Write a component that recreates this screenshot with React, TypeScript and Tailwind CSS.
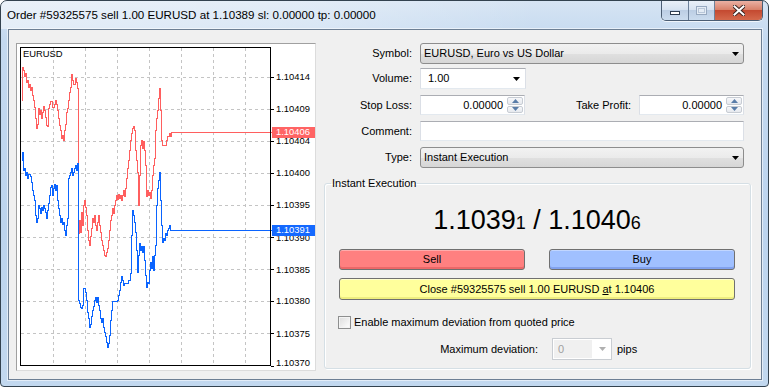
import React from "react";

type Pt = [number, number];

// traced tick path of the ask (red) and bid (blue) lines, in page pixels
const ASK: Pt[] = [
  [21, 100], [22, 67], [23, 70], [24, 76], [25, 73], [26, 82], [27, 80], [28, 87], [29, 84], [30, 90],
  [31, 87], [32, 95], [33, 100], [34, 107], [35, 118], [36, 128], [37, 124], [38, 108], [39, 114], [40, 110],
  [41, 118], [42, 112], [43, 106], [44, 110], [45, 117], [46, 125], [47, 126], [48, 108], [49, 104], [50, 101],
  [52, 107], [54, 104], [55, 100], [56, 104], [57, 110], [58, 118], [59, 125], [60, 130], [61, 138], [62, 135],
  [63, 140], [64, 130], [65, 124], [66, 112], [67, 108], [68, 100], [69, 92], [70, 87], [71, 74], [72, 80],
  [73, 84], [75, 78], [76, 82], [77, 88], [78, 233], [79, 220], [80, 232], [81, 212], [82, 225], [83, 205],
  [84, 200], [85, 207], [86, 215], [87, 230], [88, 240], [89, 245], [90, 236], [91, 228], [92, 218], [93, 222],
  [94, 215], [95, 225], [96, 230], [97, 222], [98, 215], [99, 225], [100, 232], [101, 240], [102, 245], [103, 250],
  [104, 255], [105, 256], [106, 252], [107, 248], [108, 240], [109, 230], [110, 220], [111, 215], [112, 208], [113, 213],
  [114, 205], [115, 200], [116, 195], [117, 199], [118, 194], [119, 198], [120, 195], [121, 200], [122, 195], [123, 190],
  [124, 196], [125, 188], [126, 178], [127, 168], [128, 160], [129, 150], [130, 140], [131, 133], [132, 128], [133, 126],
  [134, 130], [135, 150], [136, 160], [137, 172], [138, 205], [139, 175], [140, 145], [141, 140], [142, 148], [143, 141],
  [144, 150], [145, 165], [146, 196], [147, 190], [148, 195], [149, 192], [150, 198], [151, 190], [152, 175], [153, 165],
  [154, 158], [155, 130], [156, 118], [157, 110], [158, 98], [159, 88], [160, 110], [161, 140], [162, 145], [165, 145],
  [166, 140], [167, 136], [169, 133], [170, 136], [171, 132], [272, 132],
];

const BID: Pt[] = [
  [21, 160], [22, 152], [23, 170], [24, 168], [25, 175], [26, 172], [27, 178], [28, 174], [30, 176], [31, 182],
  [32, 190], [33, 195], [34, 200], [35, 215], [36, 222], [37, 218], [38, 205], [39, 208], [40, 213], [41, 207],
  [42, 210], [43, 205], [44, 208], [45, 212], [46, 218], [47, 210], [48, 203], [49, 195], [50, 187], [51, 185],
  [52, 195], [53, 188], [54, 184], [55, 190], [56, 185], [57, 200], [58, 208], [59, 215], [60, 222], [61, 218],
  [62, 224], [63, 222], [64, 230], [65, 235], [66, 225], [67, 218], [68, 178], [69, 175], [70, 172], [71, 168],
  [72, 175], [73, 172], [74, 168], [75, 165], [76, 170], [77, 163], [78, 300], [79, 303], [80, 307], [81, 308],
  [82, 305], [83, 288], [84, 288], [85, 292], [86, 300], [87, 312], [88, 318], [89, 327], [90, 324], [91, 316],
  [92, 310], [93, 306], [94, 300], [95, 297], [96, 302], [97, 297], [98, 305], [99, 310], [100, 318], [101, 322],
  [102, 318], [103, 327], [104, 332], [105, 336], [106, 342], [107, 347], [108, 343], [109, 335], [110, 320], [111, 310],
  [112, 301], [117, 300], [118, 295], [119, 290], [120, 282], [121, 276], [122, 280], [123, 285], [124, 283], [128, 280],
  [130, 273], [131, 235], [132, 210], [133, 215], [134, 222], [135, 232], [136, 250], [137, 272], [138, 255], [139, 243],
  [140, 250], [141, 246], [142, 252], [143, 246], [144, 260], [145, 275], [146, 287], [147, 282], [148, 283], [149, 270],
  [150, 262], [151, 268], [152, 256], [153, 270], [154, 255], [155, 245], [156, 205], [157, 188], [158, 180], [159, 172],
  [160, 200], [161, 225], [162, 242], [163, 238], [164, 240], [165, 233], [166, 235], [167, 230], [168, 228], [169, 225],
  [170, 230], [171, 230], [272, 230],
];

const H_GRID = [77, 109, 141, 173, 205, 237, 269, 301, 333];
const V_GRID = [53, 85, 117, 149, 181, 213, 245];
const PRICES: [string, number][] = [
  ["1.10414", 77], ["1.10409", 109], ["1.10404", 141], ["1.10400", 173], ["1.10395", 205],
  ["1.10390", 238], ["1.10385", 270], ["1.10380", 301], ["1.10375", 334], ["1.10370", 363],
];

const stepPath = (pts: Pt[]) =>
  pts.map(([x, y], i) => (i === 0 ? `M${x + 0.5} ${y + 0.5}` : `H${x + 0.5}V${y + 0.5}`)).join("");

const Chart: React.FC = () => (
  <svg width={298} height={326} viewBox="17 44 298 326" className="block" shapeRendering="crispEdges">
    <rect x={17} y={44} width={298} height={326} fill="#fff" />
    {H_GRID.map((y) => (
      <line key={y} x1={21} x2={270} y1={y + 0.5} y2={y + 0.5} stroke="#c4c4c4" strokeDasharray="3 3" />
    ))}
    {V_GRID.map((x) => (
      <line key={x} x1={x + 0.5} x2={x + 0.5} y1={48} y2={366} stroke="#c4c4c4" strokeDasharray="3 3" />
    ))}
    <path d={stepPath(ASK)} fill="none" stroke="#ff5f5f" />
    <path d={stepPath(BID)} fill="none" stroke="#0a64ff" />
    <rect x={20.5} y={47.5} width={250} height={318} fill="none" stroke="#000" />
    {[...H_GRID, 366].map((y) => (
      <line key={y} x1={271} x2={274} y1={y + 0.5} y2={y + 0.5} stroke="#000" />
    ))}
    <text x={23} y={55} fontSize={9.4} dominantBaseline="middle" fill="#000" shapeRendering="auto">
      EURUSD
    </text>
    {PRICES.map(([p, y]) => (
      <text key={p} x={276} y={y + 0.5} fontSize={9.4} dominantBaseline="middle" fill="#000">
        {p}
      </text>
    ))}
    <rect x={272} y={127} width={43} height={11} fill="#ff6464" />
    <text x={276} y={133} fontSize={9.4} dominantBaseline="middle" fill="#fff">
      1.10406
    </text>
    <rect x={272} y={225} width={43} height={11} fill="#1469ff" />
    <text x={276} y={231} fontSize={9.4} dominantBaseline="middle" fill="#fff">
      1.10391
    </text>
  </svg>
);

const Arrow: React.FC<{ color?: string }> = ({ color = "#000" }) => (
  <svg width="7" height="4" viewBox="0 0 7 4">
    <path d="M0 0H7L3.5 4Z" fill={color} />
  </svg>
);

const Spinner: React.FC = () => (
  <div className="flex flex-col w-[17px] h-full gap-[1px] py-[1px] pr-[1px]">
    <div className="flex-1 flex items-center justify-center rounded-[2px] border border-[#c7ccd3] bg-[linear-gradient(#f7f8fa,#e6e9ee)]">
      <svg width="7" height="4" viewBox="0 0 7 4">
        <path d="M0 4H7L3.5 0Z" fill="#5a7da8" />
      </svg>
    </div>
    <div className="flex-1 flex items-center justify-center rounded-[2px] border border-[#c7ccd3] bg-[linear-gradient(#f7f8fa,#e6e9ee)]">
      <svg width="7" height="4" viewBox="0 0 7 4">
        <path d="M0 0H7L3.5 4Z" fill="#5a7da8" />
      </svg>
    </div>
  </div>
);

const SpinField: React.FC<{ value: string }> = ({ value }) => (
  <div className="w-[105px] h-full flex bg-white border border-t-[#abadb3] border-x-[#dbdfe6] border-b-[#e3e9ef]">
    <span className="flex-1 self-center text-right pr-[4px]">{value}</span>
    <Spinner />
  </div>
);

const DropList: React.FC<{ text: string }> = ({ text }) => (
  <div className="w-[324px] h-full flex items-center justify-between pl-[3px] pr-[4px] rounded-[3px] border border-[#8d8d8d] bg-[linear-gradient(#f2f2f2_0%,#ebebeb_50%,#e0e0e0_51%,#d6d6d6_100%)]">
    <span>{text}</span>
    <Arrow />
  </div>
);

const CaptionButtons: React.FC = () => (
  <div className="flex h-[20px] rounded-b-[5px] border border-t-0 border-[#4b5d73] overflow-hidden shadow-[0_1px_0_rgba(255,255,255,0.7)]">
    <div className="w-[27px] flex items-end justify-center pb-[5px] border-r border-[#6d819a] bg-[linear-gradient(#e9f0f8_0%,#d7e3f1_45%,#bccee4_50%,#cbdcee_100%)]">
      <svg width="10" height="4" viewBox="0 0 10 4">
        <rect x="0.5" y="0.5" width="9" height="3" fill="#fff" stroke="#2e3d50" />
      </svg>
    </div>
    <div className="w-[26px] flex items-center justify-center border-r border-[#6d819a] bg-[linear-gradient(#e9f0f8_0%,#d7e3f1_45%,#bccee4_50%,#cbdcee_100%)]">
      <svg width="11" height="9" viewBox="0 0 11 9">
        <rect x="0.5" y="0.5" width="10" height="8" fill="#e4ecf5" stroke="#97a9c0" />
        <rect x="2.5" y="2.5" width="6" height="4" fill="none" stroke="#b9c7d9" />
      </svg>
    </div>
    <div className="w-[47px] flex items-center justify-center bg-[linear-gradient(#eab1a4_0%,#d9826b_45%,#c44a31_50%,#d4694c_100%)]">
      <svg width="12" height="11" viewBox="0 0 12 11">
        <path d="M1.5 1.5L10.5 9.5M10.5 1.5L1.5 9.5" stroke="#3b2420" strokeWidth="4" strokeLinecap="square" />
        <path d="M1.5 1.5L10.5 9.5M10.5 1.5L1.5 9.5" stroke="#fff" strokeWidth="2" strokeLinecap="square" />
      </svg>
    </div>
  </div>
);

const OrderForm: React.FC = () => (
  <div className="ml-[8px] w-[427px] flex flex-col">
    <div className="mt-[13px] h-[21px] flex items-center">
      <span className="w-[88px] text-right">Symbol:</span>
      <div className="ml-[8px] h-full">
        <DropList text="EURUSD, Euro vs US Dollar" />
      </div>
    </div>
    <div className="mt-[4px] h-[21px] flex items-center">
      <span className="w-[88px] text-right">Volume:</span>
      <div className="ml-[8px] w-[106px] h-full flex items-center justify-between pl-[7px] pr-[5px] bg-white border border-t-[#abadb3] border-x-[#dbdfe6] border-b-[#e3e9ef]">
        <span>1.00</span>
        <Arrow />
      </div>
    </div>
    <div className="mt-[6px] h-[20px] flex items-center">
      <span className="w-[88px] text-right">Stop Loss:</span>
      <div className="ml-[8px] h-full">
        <SpinField value="0.00000" />
      </div>
      <span className="w-[106px] text-right">Take Profit:</span>
      <div className="ml-[8px] h-full">
        <SpinField value="0.00000" />
      </div>
    </div>
    <div className="mt-[6px] h-[20px] flex items-center">
      <span className="w-[88px] text-right">Comment:</span>
      <div className="ml-[8px] w-[324px] h-full bg-white border border-t-[#abadb3] border-x-[#dbdfe6] border-b-[#e3e9ef]" />
    </div>
    <div className="mt-[6px] h-[21px] flex items-center">
      <span className="w-[88px] text-right">Type:</span>
      <div className="ml-[8px] h-full">
        <DropList text="Instant Execution" />
      </div>
    </div>

    <fieldset className="mt-[9px] rounded-[3px] border border-[#d5dfe5] shadow-[inset_1px_1px_0_#fff,1px_1px_0_#fff]">
      <legend className="ml-[6px] px-[1px] leading-[13px]">Instant Execution</legend>
      <div className="pl-[14px] pr-[15px] pb-[8px] flex flex-col">
        <div className="mt-[14px] h-[32px] leading-[32px] text-center text-[27px] text-black">
          1.1039<span className="text-[18px]">1</span> / 1.1040<span className="text-[18px]">6</span>
        </div>
        <div className="mt-[13px] flex gap-[24px]">
          <button className="w-[186px] h-[21px] rounded-[3px] border border-[#707070] bg-[#ff8080] shadow-[inset_0_1px_0_rgba(255,255,255,0.35),inset_0_-2px_0_rgba(200,60,60,0.35)]">
            Sell
          </button>
          <button className="w-[186px] h-[21px] rounded-[3px] border border-[#707070] bg-[#a0c0ff] shadow-[inset_0_1px_0_rgba(255,255,255,0.35),inset_0_-2px_0_rgba(60,90,200,0.3)]">
            Buy
          </button>
        </div>
        <button className="mt-[8px] w-[396px] h-[22px] rounded-[3px] border border-[#707070] bg-[#ffff9c] shadow-[inset_0_1px_0_rgba(255,255,255,0.5),inset_0_-2px_0_rgba(200,200,60,0.3)]">
          Close #59325575 sell 1.00 EURUSD <span className="underline">a</span>t 1.10406
        </button>
        <label className="mt-[16px] h-[13px] flex items-center -ml-[1px]">
          <span className="w-[13px] h-[13px] border border-[#8e8f8f] bg-[linear-gradient(135deg,#dcdcdc,#ffffff)] shadow-[inset_0_0_0_1px_#f4f4f4]" />
          <span className="ml-[3px]">Enable maximum deviation from quoted price</span>
        </label>
        <div className="mt-[9px] h-[22px] flex items-center">
          <span className="w-[199px] text-right">Maximum deviation:</span>
          <div className="ml-[14px] w-[60px] h-full flex border border-[#c9cdd2] bg-white">
            <span className="flex-1 m-[1px] pl-[4px] flex items-center bg-[#f0f0f0] text-[#a0a0a0]">0</span>
            <span className="w-[18px] flex items-center justify-center">
              <Arrow color="#b0b0b0" />
            </span>
          </div>
          <span className="ml-[5px]">pips</span>
        </div>
      </div>
    </fieldset>
  </div>
);

const App: React.FC = () => {
  return (
    <div className="w-[769px] h-[387px] font-['Liberation_Sans',Arial,sans-serif] text-[11px] text-black">
      <div className="w-full h-full flex flex-col rounded-t-[7px] rounded-b-[4px] border border-[#33424f] bg-[linear-gradient(180deg,#d6e4f3_0%,#c4d9f0_10%,#bcd4ee_60%,#c2d8ef_100%)] overflow-hidden">
        <div className="h-[28px] flex justify-between bg-[linear-gradient(90deg,rgba(255,255,255,0.5)_0%,rgba(255,255,255,0.3)_40%,rgba(255,255,255,0)_70%)]">
          <span className="pl-[6px] pt-[6px] text-[11.6px] leading-[15px]">
            Order #59325575 sell 1.00 EURUSD at 1.10389 sl: 0.00000 tp: 0.00000
          </span>
          <div className="mr-[5px]">
            <CaptionButtons />
          </div>
        </div>
        <div className="ml-[7px] w-[754px] h-[351px] border border-[#6d7f94] bg-[#f0f0f0] shadow-[0_0_0_1px_rgba(255,255,255,0.55)] flex items-start">
          <div className="ml-[7px] mt-[13px] w-[300px] h-[328px] border border-t-[#a0a0a0] border-l-[#a0a0a0] border-r-[#dcdcdc] border-b-[#dcdcdc]">
            <Chart />
          </div>
          <OrderForm />
        </div>
      </div>
    </div>
  );
};

export default App;
